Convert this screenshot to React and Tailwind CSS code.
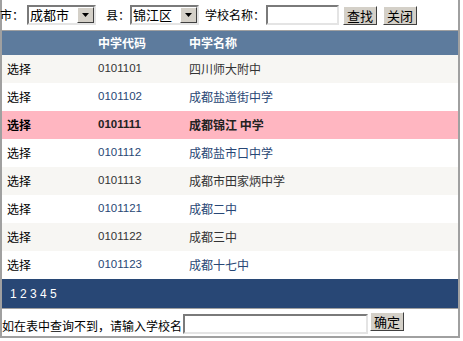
import React from "react";

const rows = [
  { code: "0101101", name: "四川师大附中", bg: "bg-[#f7f6f3]", color: "text-[#333333]" },
  { code: "0101102", name: "成都盐道街中学", bg: "bg-white", color: "text-[#284775]" },
  { code: "0101111", name: "成都锦江 中学", bg: "bg-[#ffb6c1]", color: "text-[#333333]", bold: true },
  { code: "0101112", name: "成都盐市口中学", bg: "bg-white", color: "text-[#284775]" },
  { code: "0101113", name: "成都市田家炳中学", bg: "bg-[#f7f6f3]", color: "text-[#333333]" },
  { code: "0101121", name: "成都二中", bg: "bg-white", color: "text-[#284775]" },
  { code: "0101122", name: "成都三中", bg: "bg-[#f7f6f3]", color: "text-[#333333]" },
  { code: "0101123", name: "成都十七中", bg: "bg-white", color: "text-[#284775]" },
];

function Select({ value, className }) {
  return (
    <div
      className={`w-[69px] h-[20px] flex bg-white border-2 border-t-[#7a7a7a] border-l-[#7a7a7a] border-r-[#e4e4e4] border-b-[#e4e4e4] ${className}`}
    >
      <div className="flex-1 text-[13px] leading-[16px] pl-[1px] text-black">{value}</div>
      <div className="w-[17px] h-full bg-[#d4d0c8] border border-t-white border-l-white border-r-[#404040] border-b-[#404040] flex items-center justify-center">
        <svg width="7" height="4" viewBox="0 0 7 4">
          <polygon points="0,0 7,0 3.5,4" fill="#000" />
        </svg>
      </div>
    </div>
  );
}

function Btn({ children, className = "" }) {
  return (
    <div
      className={`h-[19px] bg-[#d4d0c8] border border-t-white border-l-white border-r-[#404040] border-b-[#404040] flex items-center justify-center text-[13px] text-black leading-none ${className}`}
    >
      {children}
    </div>
  );
}

export default function App() {
  return (
    <div className="w-[463px] h-[341px] bg-white font-['Noto_Sans_CJK_SC','Noto_Sans',sans-serif] text-[12px] text-black">
      <div className="w-[460px] border-x-2 border-b-2 border-[#a0a0a0]">
        {/* toolbar */}
        <div className="h-[31px] flex items-center -ml-[2px] border-b border-[#a0a0a0]">
          <span className="leading-none">市：</span>
          <Select value="成都市" className="ml-[3px]" />
          <span className="ml-[10px] leading-none">县：</span>
          <Select value="锦江区" className="ml-[0px]" />
          <span className="ml-[6px] leading-none">学校名称：</span>
          <div className="ml-[1px] w-[73px] h-[20px] bg-white border-2 border-t-[#7a7a7a] border-l-[#7a7a7a] border-r-[#e4e4e4] border-b-[#e4e4e4]" />
          <Btn className="ml-[4px] w-[34px]">查找</Btn>
          <Btn className="ml-[6px] w-[34px]">关闭</Btn>
        </div>
        {/* header */}
        <div className="h-[24px] bg-[#5d7b9d] text-white font-bold grid grid-cols-[96px_91px_1fr] items-center">
          <div />
          <div>中学代码</div>
          <div>中学名称</div>
        </div>
        {rows.map((r) => (
          <div
            key={r.code}
            className={`h-[28px] grid grid-cols-[96px_91px_1fr] items-center ${r.bg} ${r.bold ? "font-bold" : ""}`}
          >
            <div className="pl-[5px] text-black">选择</div>
            <div className={`font-['Liberation_Sans',sans-serif] text-[11.5px] ${r.bold ? "text-[#222]" : r.color}`}>{r.code}</div>
            <div className={r.bold ? "text-[#222]" : r.color}>{r.name}</div>
          </div>
        ))}
        {/* pager */}
        <div className="h-[29px] bg-[#284775] text-white flex items-center pl-[8px] font-['Liberation_Sans',sans-serif] text-[12px]">
          1 2 3 4 5
        </div>
        {/* bottom */}
        <div className="h-[28px] border-t border-[#a0a0a0] flex items-end pb-[2px]">
          <span className="leading-none pb-[2px]">如在表中查询不到，请输入学校名</span>
          <div className="ml-[1px] w-[185px] h-[20px] bg-white border-2 border-t-[#7a7a7a] border-l-[#7a7a7a] border-r-[#e4e4e4] border-b-[#e4e4e4]" />
          <Btn className="ml-[2px] w-[34px] self-start mt-[3px]">确定</Btn>
        </div>
      </div>
    </div>
  );
}
